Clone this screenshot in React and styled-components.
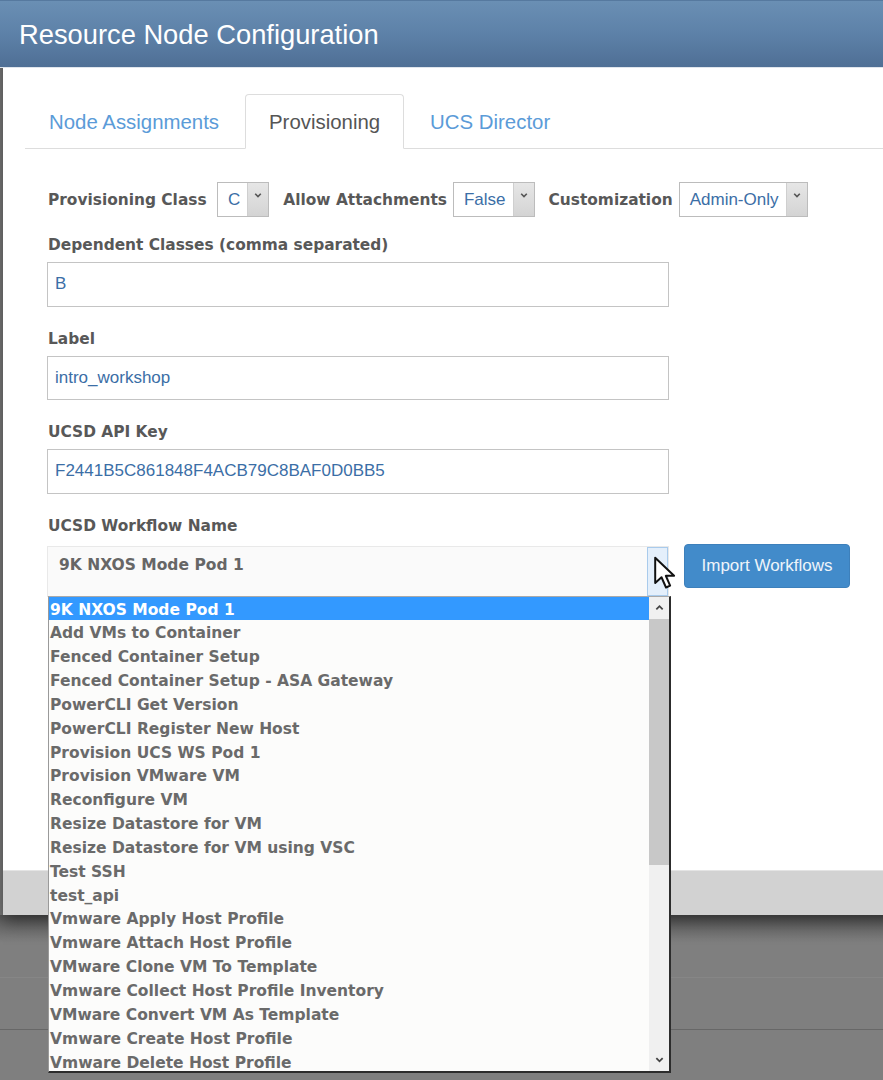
import React from "react";
import styled, { createGlobalStyle } from "styled-components";

const GlobalStyle = createGlobalStyle`
  html, body {
    margin: 0;
    padding: 0;
    background: #7f7f7f;
  }
  body {
    font-family: "Liberation Sans", Arial, sans-serif;
  }
`;

const workflows = [
  "9K NXOS Mode Pod 1",
  "Add VMs to Container",
  "Fenced Container Setup",
  "Fenced Container Setup - ASA Gateway",
  "PowerCLI Get Version",
  "PowerCLI Register New Host",
  "Provision UCS WS Pod 1",
  "Provision VMware VM",
  "Reconfigure VM",
  "Resize Datastore for VM",
  "Resize Datastore for VM using VSC",
  "Test SSH",
  "test_api",
  "Vmware Apply Host Profile",
  "Vmware Attach Host Profile",
  "VMware Clone VM To Template",
  "Vmware Collect Host Profile Inventory",
  "VMware Convert VM As Template",
  "Vmware Create Host Profile",
  "Vmware Delete Host Profile",
];

const tabs = ["Node Assignments", "Provisioning", "UCS Director"];

function Chevron({ up, size = 9, color = "#444" }) {
  return (
    <svg width={size} height={size} viewBox="0 0 10 10">
      <path
        d={up ? "M1.5 7 L5 3.5 L8.5 7" : "M1.5 3.5 L5 7 L8.5 3.5"}
        fill="none"
        stroke={color}
        strokeWidth="2"
      />
    </svg>
  );
}

function Cursor() {
  return (
    <CursorWrap>
      <svg width="28" height="36" viewBox="0 0 14 20">
        <path
          d="M1 1 L1 15 L4.5 11.8 L7 17.5 L9.3 16.5 L6.9 11 L11.5 11 Z"
          fill="#fff"
          stroke="#111"
          strokeWidth="1.1"
          strokeLinejoin="round"
        />
      </svg>
    </CursorWrap>
  );
}

function SmallSelect({ value }) {
  return (
    <SelectBox>
      <SelectValue>{value}</SelectValue>
      <SelectArrow>
        <Chevron size={8} color="#555" />
      </SelectArrow>
    </SelectBox>
  );
}

function Field({ label, value }) {
  return (
    <Group>
      <Label>{label}</Label>
      <TextInput>{value}</TextInput>
    </Group>
  );
}

export default function App() {
  return (
    <Page>
      <GlobalStyle />
      <Modal>
        <Header>Resource Node Configuration</Header>
        <Body>
          <Tabs>
            {tabs.map((t) => (
              <Tab key={t} $active={t === "Provisioning"}>
                {t}
              </Tab>
            ))}
          </Tabs>
          <Content>
            <InlineRow>
              <InlineLabel $w={163}>Provisioning Class</InlineLabel>
              <SmallSelect value="C" />
              <InlineLabel>Allow Attachments</InlineLabel>
              <SmallSelect value="False" />
              <InlineLabel>Customization</InlineLabel>
              <SmallSelect value="Admin-Only" />
            </InlineRow>
            <Field label="Dependent Classes (comma separated)" value="B" />
            <Field label="Label" value="intro_workshop" />
            <Field label="UCSD API Key" value="F2441B5C861848F4ACB79C8BAF0D0BB5" />
            <Group>
              <Label $tight>UCSD Workflow Name</Label>
              <WorkflowRow>
                <WorkflowSelect>
                  <WorkflowValue>{workflows[0]}</WorkflowValue>
                  <WorkflowArrow>
                    <Chevron size={8} color="#222" />
                  </WorkflowArrow>
                  <Cursor />
                  <ListBox>
                    <Options>
                      {workflows.map((w, i) => (
                        <Option key={w} $selected={i === 0}>
                          {w}
                        </Option>
                      ))}
                    </Options>
                    <ScrollBar>
                      <ScrollButton>
                        <Chevron up size={9} color="#444" />
                      </ScrollButton>
                      <Thumb />
                      <Track />
                      <ScrollButton>
                        <Chevron size={9} color="#444" />
                      </ScrollButton>
                    </ScrollBar>
                  </ListBox>
                </WorkflowSelect>
                <ImportButton>Import Workflows</ImportButton>
              </WorkflowRow>
            </Group>
          </Content>
        </Body>
        <Footer />
      </Modal>
      <Behind>
        <BehindRow $line="#868686" $h={62} />
        <BehindRow $line="#676767" $h={51} />
      </Behind>
    </Page>
  );
}

const Page = styled.div`
  width: 883px;
  height: 1080px;
  overflow: hidden;
  background: #7f7f7f;
  position: relative;
`;

const Modal = styled.div`
  margin-left: 3px;
  width: 900px;
  display: flex;
  flex-direction: column;
  box-shadow: 0 6px 16px rgba(0, 0, 0, 0.5);
  position: relative;
  z-index: 1;
`;

const Header = styled.div`
  margin-left: -3px;
  height: 68px;
  box-sizing: border-box;
  padding: 18px 0 0 19px;
  border-top: 1px solid #56799f;
  border-bottom: 1px solid #dfe5ec;
  background: linear-gradient(to bottom, #6a8fb4 0%, #5d81a8 50%, #4f6f95 100%);
  color: #fff;
  font-size: 27.3px;
  line-height: 32px;
`;

const Body = styled.div`
  background: #fff;
  height: 802px;
  box-sizing: border-box;
  padding: 26px 0 0 22px;
`;

const Footer = styled.div`
  height: 45px;
  background: #d2d2d2;
  border-top: 1px solid #e4e4e4;
  box-sizing: border-box;
`;

const Tabs = styled.div`
  display: flex;
  border-bottom: 1px solid #dddddd;
  height: 54px;
`;

const Tab = styled.div`
  padding: 0 23px;
  margin-right: 2px;
  margin-bottom: -1px;
  font-size: 20.4px;
  line-height: 54px;
  color: ${(p) => (p.$active ? "#555" : "#5b9bd8")};
  border: 1px solid ${(p) => (p.$active ? "#dddddd" : "transparent")};
  border-bottom-color: ${(p) => (p.$active ? "#fff" : "transparent")};
  border-radius: 4px 4px 0 0;
  background: ${(p) => (p.$active ? "#fff" : "transparent")};
`;

const Content = styled.div`
  padding: 33px 0 0 22px;
`;

const InlineRow = styled.div`
  display: flex;
  align-items: center;
  height: 35px;
  margin-bottom: 16px;
`;

const labelFont = `
  font-family: "DejaVu Sans", Verdana, sans-serif;
  font-weight: bold;
  color: #585858;
`;

const InlineLabel = styled.span`
  ${labelFont}
  font-size: 15.4px;
  white-space: nowrap;
  margin: 0 6px 0 14px;
  ${(p) => (p.$w ? `width: ${p.$w}px;` : "")}
  &:first-child {
    margin-left: 1px;
  }
`;

const SelectBox = styled.div`
  display: flex;
  height: 35px;
  box-sizing: border-box;
  border: 1px solid #bcbcbc;
  background: #fff;
`;

const SelectValue = styled.span`
  padding: 0 7px 0 10px;
  font-size: 17px;
  line-height: 33px;
  color: #3b6ea6;
`;

const SelectArrow = styled.span`
  width: 21px;
  display: flex;
  align-items: flex-start;
  justify-content: center;
  padding-top: 8px;
  box-sizing: border-box;
  background: linear-gradient(to bottom, #e6e6e6, #d4d4d4);
  border-left: 1px solid #cfcfcf;
`;

const Group = styled.div`
  margin-bottom: 20px;
`;

const Label = styled.div`
  ${labelFont}
  font-size: 15.4px;
  line-height: 22px;
  padding-top: 1px;
  margin: 0 0 ${(p) => (p.$tight ? "9px" : "6px")} 1px;
`;

const TextInput = styled.div`
  width: 622px;
  height: 44.5px;
  box-sizing: border-box;
  border: 1px solid #c4c4c4;
  padding: 0 7px;
  font-size: 17px;
  line-height: 42.5px;
  color: #3b6ea6;
  background: #fff;
`;

const WorkflowRow = styled.div`
  display: flex;
  align-items: flex-start;
  gap: 15px;
`;

const WorkflowSelect = styled.div`
  position: relative;
  width: 622px;
  height: 51px;
  box-sizing: border-box;
  border: 1px solid #e9e9e9;
  background: #fafafa;
`;

const WorkflowValue = styled.div`
  ${labelFont}
  color: #666;
  font-size: 15.5px;
  line-height: 22px;
  padding: 7px 11px;
`;

const WorkflowArrow = styled.div`
  position: absolute;
  right: 0;
  top: 0;
  bottom: 0;
  width: 21px;
  box-sizing: border-box;
  background: #e4effb;
  border: 1px solid #a9cbec;
  display: flex;
  align-items: center;
  justify-content: center;
`;

const CursorWrap = styled.div`
  position: absolute;
  right: -12px;
  top: 9px;
  z-index: 3;
  line-height: 0;
`;

const ListBox = styled.div`
  position: absolute;
  left: 0;
  top: 100%;
  width: 623px;
  height: 477px;
  box-sizing: border-box;
  border-top: 1px solid #a9a9a9;
  border-left: 1px solid #9a9a9a;
  border-right: 2px solid #2c2c2c;
  border-bottom: 2px solid #2c2c2c;
  background: #fcfcfb;
  display: flex;
  z-index: 2;
  overflow: hidden;
`;

const Options = styled.div`
  flex: 1;
  overflow: hidden;
`;

const Option = styled.div`
  ${labelFont}
  font-size: 15.5px;
  height: 23.85px;
  line-height: 27px;
  overflow: hidden;
  padding-left: 1px;
  white-space: nowrap;
  color: ${(p) => (p.$selected ? "#fff" : "#6a6a6a")};
  background: ${(p) => (p.$selected ? "#3399ff" : "transparent")};
`;

const ScrollBar = styled.div`
  width: 20px;
  display: flex;
  flex-direction: column;
  background: #f0f0f0;
`;

const ScrollButton = styled.div`
  height: 22px;
  display: flex;
  align-items: center;
  justify-content: center;
  background: #f0f0f0;
`;

const Thumb = styled.div`
  height: 246px;
  background: #c8c8c8;
`;

const Track = styled.div`
  flex: 1;
  background: #f0f0f0;
`;

const ImportButton = styled.div`
  width: 166px;
  height: 44px;
  box-sizing: border-box;
  margin-top: -2px;
  background: #428bca;
  border: 1px solid #3d80bb;
  border-radius: 4px;
  color: #eef4fa;
  font-size: 17px;
  line-height: 42px;
  text-align: center;
`;

const Behind = styled.div`
  background: linear-gradient(to bottom, #5c5c5c 0px, #7f7f7f 28px);
`;

const BehindRow = styled.div`
  height: ${(p) => p.$h}px;
  border-bottom: 1px solid ${(p) => p.$line};
`;
